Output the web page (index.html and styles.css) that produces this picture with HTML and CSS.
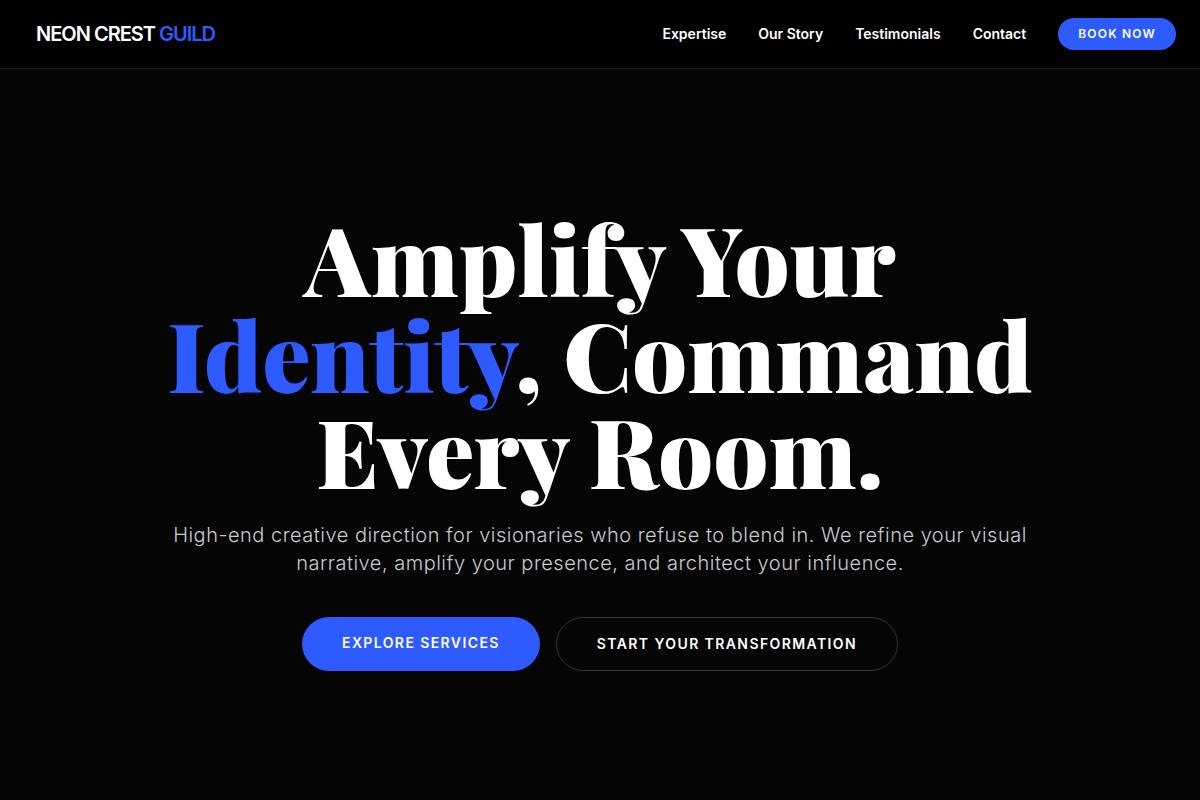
FILE: index.html
```html
<!DOCTYPE html>
<html lang="en">
<head>
    <meta charset="UTF-8">
    <meta name="viewport" content="width=device-width, initial-scale=1.0">
    <title>Neon Crest Guild</title>
    <link rel="stylesheet" href="styles.css">
</head>
<body>
    <header class="header">
        <a class="logo" href="#">NEON CREST <span class="accent">GUILD</span></a>
        <nav class="nav">
            <a class="nav-link" href="#expertise">Expertise</a>
            <a class="nav-link" href="#story">Our Story</a>
            <a class="nav-link" href="#testimonials">Testimonials</a>
            <a class="nav-link" href="#contact">Contact</a>
            <a class="book-btn" href="#book">BOOK NOW</a>
        </nav>
    </header>

    <main class="hero">
        <div class="hero-content">
            <h1 class="hero-title">Amplify Your <span class="accent">Identity</span>, Command Every Room.</h1>
            <p class="hero-text">High-end creative direction for visionaries who refuse to blend in. We refine your visual narrative, amplify your presence, and architect your influence.</p>
            <div class="hero-actions">
                <a class="btn btn-primary" href="#expertise">EXPLORE SERVICES</a>
                <a class="btn btn-outline" href="#contact">START YOUR TRANSFORMATION</a>
            </div>
        </div>
    </main>
</body>
</html>
```

FILE: styles.css
```css
* {
    box-sizing: border-box;
}

body {
    display: flex;
    flex-direction: column;
    min-height: 100vh;
    margin: 0;
    background: #050505;
    color: #ffffff;
    font-family: Inter, sans-serif;
}

a {
    color: inherit;
    text-decoration: none;
}

.accent {
    color: #2e5bff;
}

.header {
    display: flex;
    justify-content: space-between;
    align-items: center;
    padding: 18px 24px;
    background: #000000;
    border-bottom: 1px solid #1a1a1a;
}

.logo {
    padding: 0 12px;
    font-size: 20px;
    font-weight: 600;
    line-height: 28px;
    letter-spacing: -0.05em;
}

.nav {
    display: flex;
    align-items: center;
    gap: 32px;
}

.nav-link {
    font-size: 14px;
    font-weight: 600;
    line-height: 20px;
}

.book-btn {
    padding: 8px 20px;
    border-radius: 16px;
    background: #2e5bff;
    font-size: 12px;
    font-weight: 600;
    line-height: 16px;
    letter-spacing: 0.1em;
}

.hero {
    display: flex;
    flex: 1;
    align-items: center;
    justify-content: center;
    padding: 24px 24px 14px;
}

.hero-content {
    max-width: 896px;
    text-align: center;
}

.hero-title {
    margin: 0 0 24px;
    font-family: "Playfair Display", "DM Serif Display", "Liberation Serif", serif;
    font-size: 96px;
    font-weight: 900;
    line-height: 96px;
}

.hero-text {
    margin: 0 0 40px;
    color: #c8cbd0;
    font-size: 20px;
    font-weight: 300;
    line-height: 28px;
    letter-spacing: 0.025em;
}

.hero-actions {
    display: flex;
    justify-content: center;
    gap: 16px;
}

.btn {
    padding: 16px 40px;
    border-radius: 27px;
    font-size: 14px;
    font-weight: 600;
    line-height: 20px;
    letter-spacing: 0.1em;
}

.btn-primary {
    background: #2e5bff;
}

.btn-outline {
    border: 1px solid #333333;
}
```
